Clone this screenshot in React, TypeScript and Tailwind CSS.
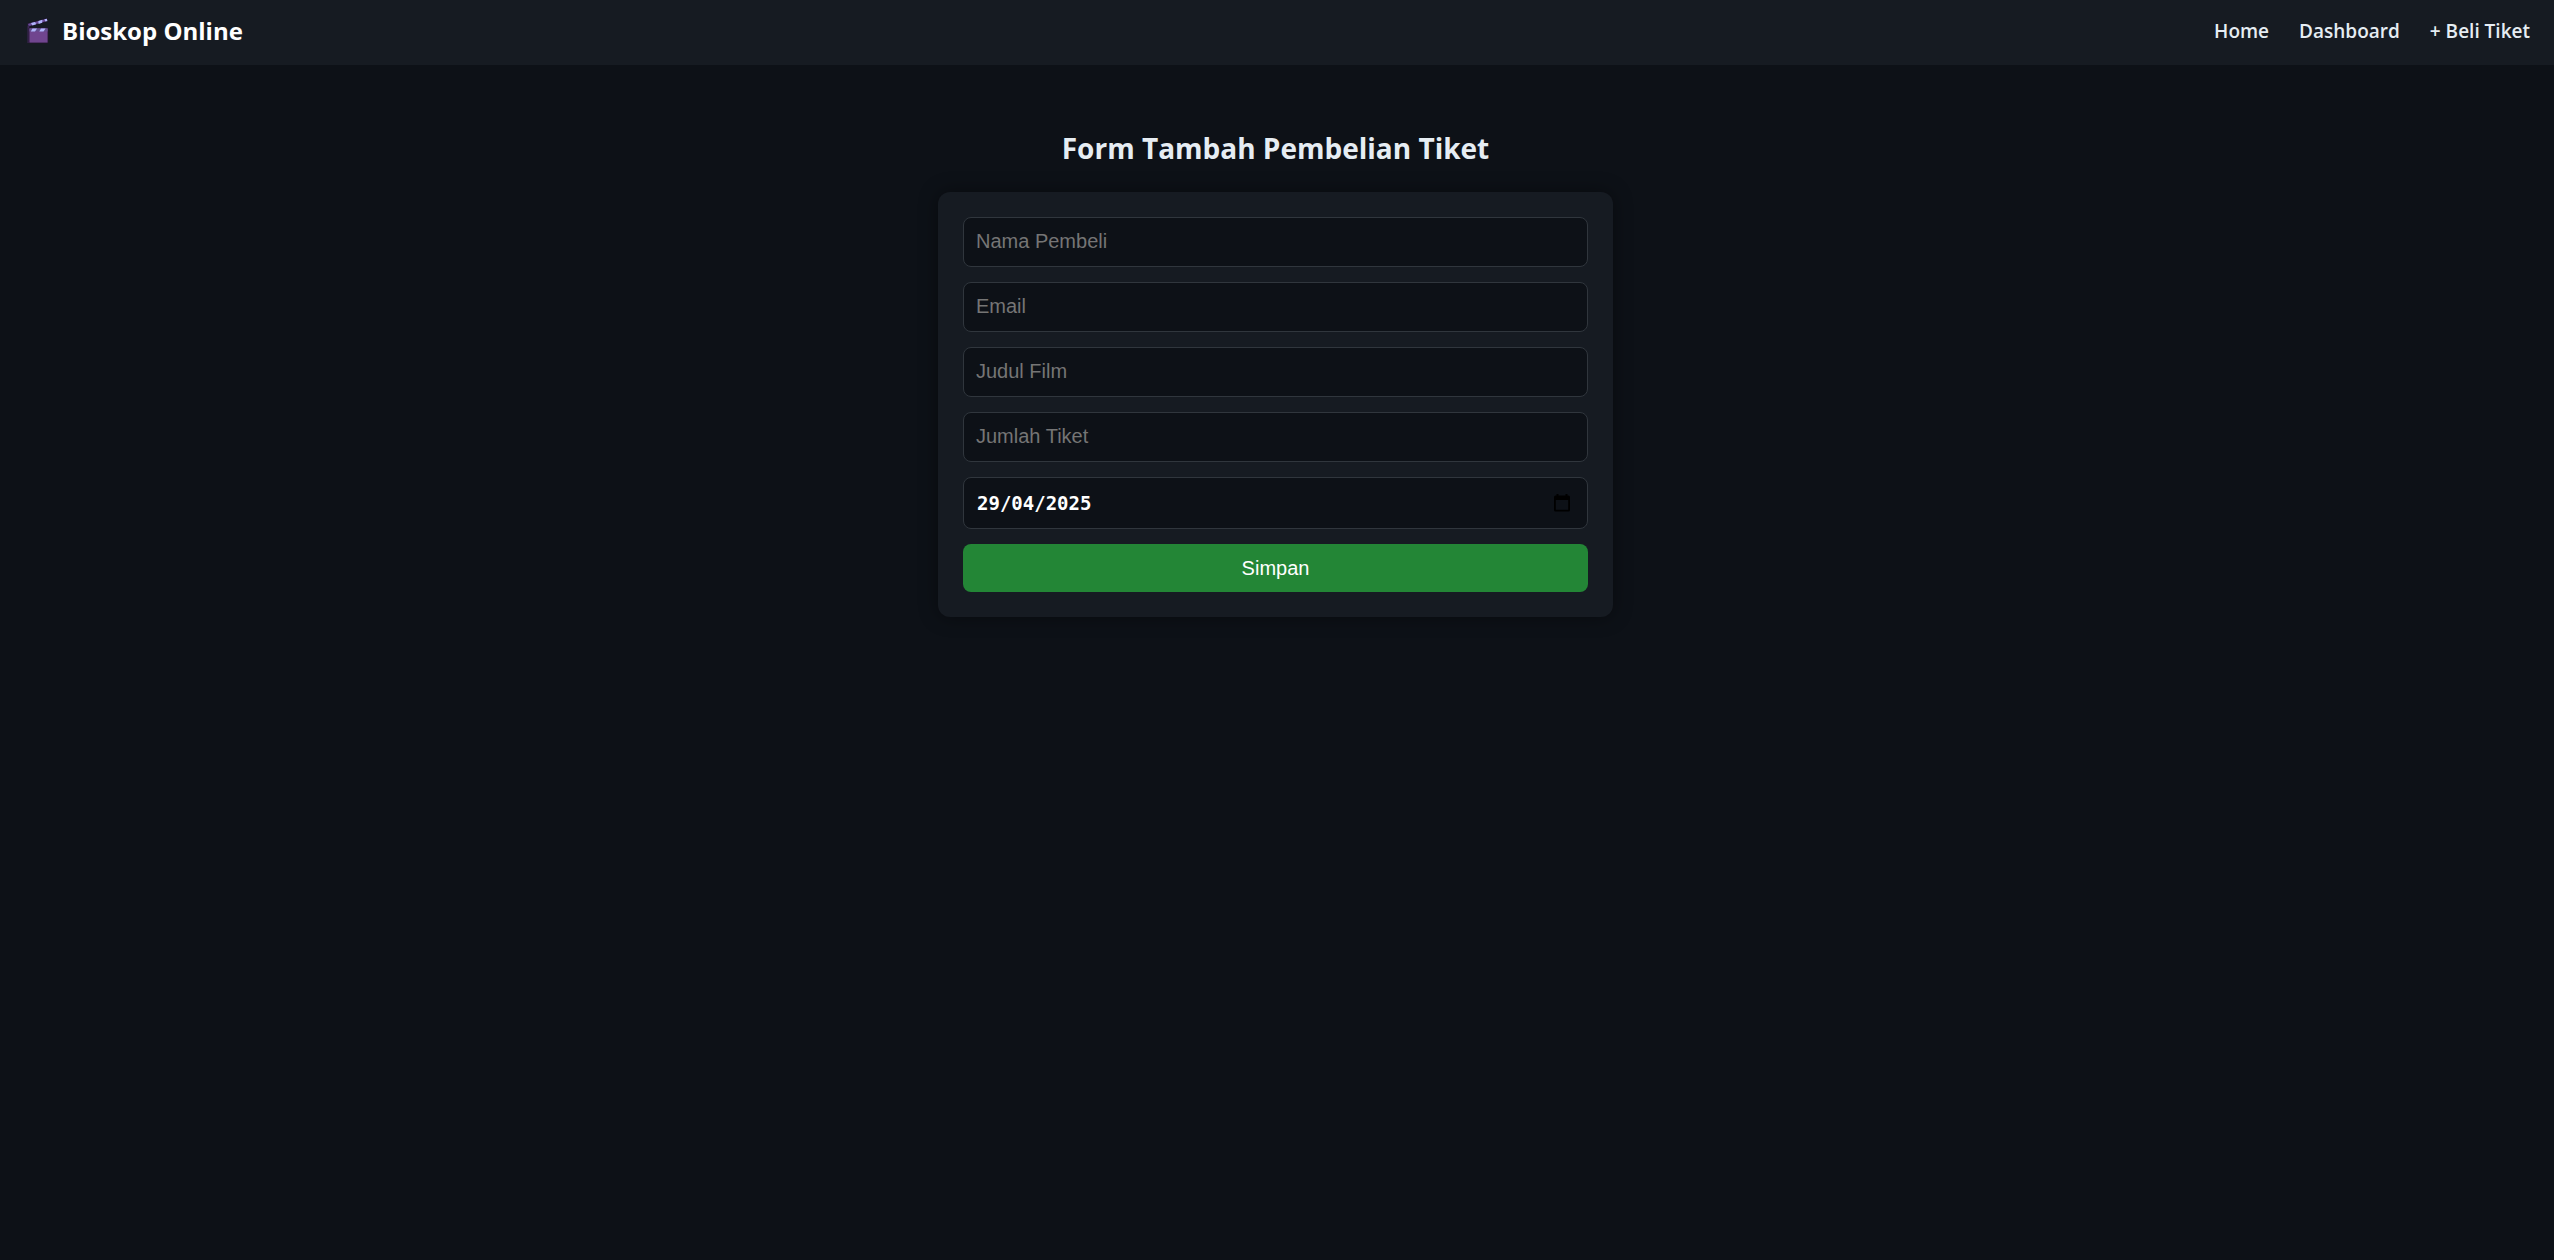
import { useState } from "react";

const fields = [
  { id: "nama", label: "Nama Pembeli", type: "text" },
  { id: "email", label: "Email", type: "email" },
  { id: "film", label: "Judul Film", type: "text" },
  { id: "jumlah", label: "Jumlah Tiket", type: "number" },
];

const links = ["Home", "Dashboard", "+ Beli Tiket"];

function ClapperIcon() {
  return (
    <svg viewBox="0 0 24 28" className="h-7 w-6" aria-hidden="true">
      <path d="M1.500 6.500 21 1.200l.800 3L2.300 9.800z" fill="#6b4c9a" stroke="#15101f" strokeWidth="0.800" />
      <path d="m5 6 4-1.100 1.200 2.400-3.800 1.100zM12.400 3.900l4-1.100-.2 3-3.600 1.100zM18.400 2.300l2.400-.6.600 2.300-2 .6z" fill="#b0b4fb" />
      <path d="M1.500 8.500h2V26h-2z" fill="#3d2756" />
      <path d="M3 11h19v15H3z" fill="#70458f" stroke="#21152c" strokeWidth="0.800" />
      <path d="M3.400 11.400h18.200v3H3.400z" fill="#63508f" />
      <path d="M6.500 11.400H11l-2 3H4.800zM15 11.400h4.500l-2 3h-4.200z" fill="#b0b4fb" />
    </svg>
  );
}

function CalendarIcon() {
  return (
    <svg viewBox="0 0 18 18" className="size-[18px]" aria-hidden="true">
      <path
        fill="black"
        fillRule="evenodd"
        d="M3.500 0h2v1.500h7V0h2v1.500h1A1.500 1.500 0 0 1 17 3v13a1.500 1.500 0 0 1-1.500 1.500h-13A1.500 1.500 0 0 1 1 16V3a1.500 1.500 0 0 1 1.500-1.500h1zM2.800 6v9.700h12.400V6z"
      />
    </svg>
  );
}

export default function App() {
  const [date, setDate] = useState("29/04/2025");

  return (
    <div className="min-h-screen bg-[#0d1117] font-['Open_Sans','Noto_Sans',sans-serif] text-[#e6edf3]">
      <header className="flex h-[65px] items-center justify-between bg-[#161b22] pr-6 pb-[3px] pl-[26px]">
        <a href="#" className="flex items-center gap-3 text-2xl font-bold text-white">
          <ClapperIcon />
          Bioskop Online
        </a>
        <nav className="flex gap-[30px] text-[19px] font-semibold">
          {links.map((link) => (
            <a key={link} href="#">
              {link}
            </a>
          ))}
        </nav>
      </header>

      <main className="mx-auto max-w-[678px] pt-[62px] pr-[3px]">
        <h1 className="text-center text-[28px] leading-[42px] font-bold">Form Tambah Pembelian Tiket</h1>
        <form
          className="mt-[23px] flex flex-col gap-[15px] rounded-xl bg-[#161b22] p-[25px] font-['Liberation_Sans',sans-serif] text-xl shadow-[0_0_19px_rgba(0,0,0,0.4)]"
          onSubmit={(event) => event.preventDefault()}
        >
          {fields.map((field) => (
            <input
              key={field.id}
              id={field.id}
              type={field.type}
              aria-label={field.label}
              placeholder={field.label}
              className="h-[50px] w-full rounded-lg border border-[#30363d] bg-[#0d1117] px-3 pb-0.5 text-white placeholder:text-[#757575]"
            />
          ))}
          <div className="flex h-[52px] items-center rounded-lg border border-[#30363d] bg-[#0d1117] pr-4 pl-[13px]">
            <input
              type="text"
              inputMode="numeric"
              aria-label="Tanggal"
              value={date}
              onChange={(event) => setDate(event.target.value)}
              className="min-w-0 flex-1 bg-transparent font-['DejaVu_Sans_Mono',monospace] text-[19px] font-bold text-white"
            />
            <button type="button" aria-label="Pilih tanggal">
              <CalendarIcon />
            </button>
          </div>
          <button type="submit" className="h-12 rounded-lg bg-[#238636] text-white">
            Simpan
          </button>
        </form>
      </main>
    </div>
  );
}
